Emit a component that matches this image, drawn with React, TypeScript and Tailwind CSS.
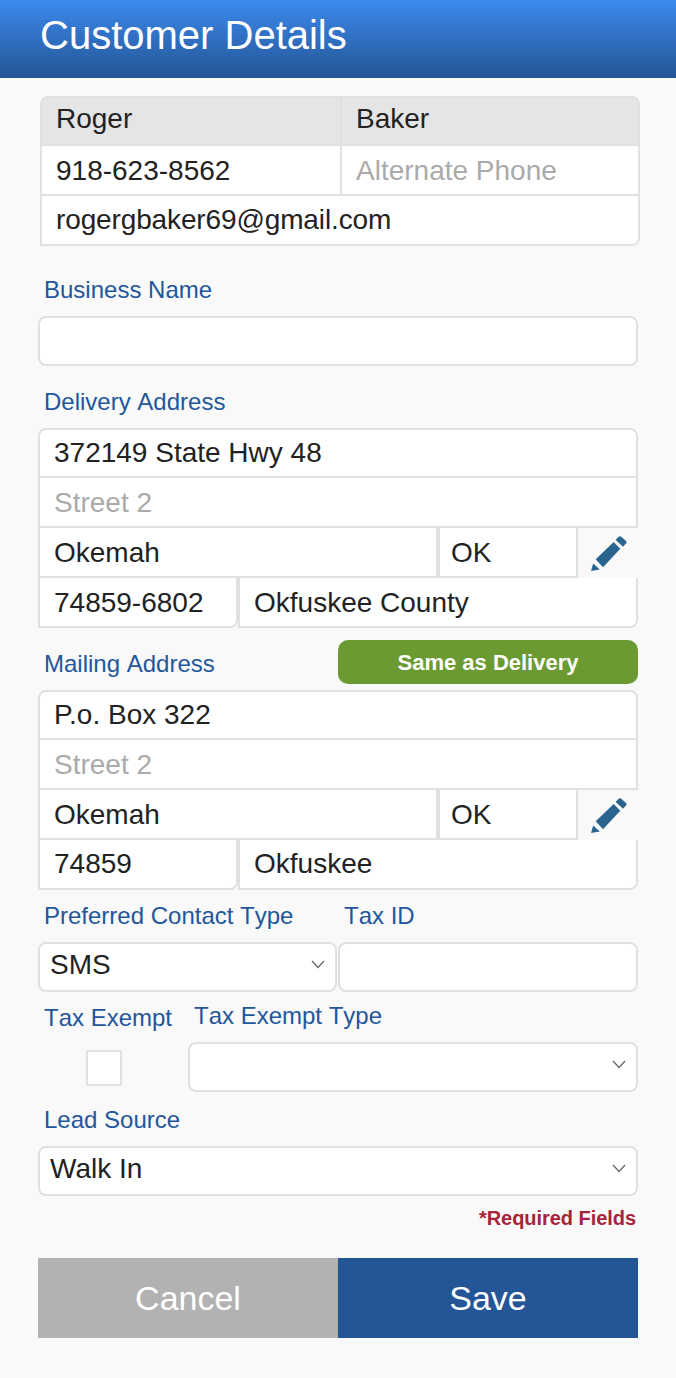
function Chevron() {
  return (
    <svg viewBox="0 0 14 9" className="w-[14px] h-[9px] text-[#666]" fill="none" stroke="currentColor" strokeWidth="1.2">
      <path d="M1 1l6 6.5L13 1" />
    </svg>
  );
}

function Pencil() {
  return (
    <svg viewBox="9 9 37 37" className="w-[37px] h-[37px]" fill="#2a6590">
      <path d="M10 45l2.2-7.6 6.6 6z" />
      <path d="M14.7 33.3L32.7 16l6.6 6.7L22 41.3z" />
      <path d="M34.7 14l2.6-3.1c.8-.9 2-1 2.9-.2l4.6 4c.9.8 1 2 .2 2.9l-3 3.1z" />
    </svg>
  );
}

function Label({ children, className = "" }: { children: string; className?: string }) {
  return <div className={"text-[24px] leading-[28px] text-[#23569a] [font-kerning:none] " + className}>{children}</div>;
}

function Cell({ value, placeholder, className = "" }: { value?: string; placeholder?: string; className?: string }) {
  return (
    <div className={"flex items-center h-full px-[14px] border-[#e0e0e0] bg-white " + className}>
      {value ? <span className="text-[#222]">{value}</span> : <span className="text-[#aaa]">{placeholder}</span>}
    </div>
  );
}

function SelectBox({ value, className = "" }: { value?: string; className?: string }) {
  return (
    <div className={"relative h-[50px] rounded-lg border-2 border-[#e0e0e0] bg-white flex items-center pl-[10px] pb-[4px] text-[#222] " + className}>
      {value}
      <div className="absolute right-[10px] top-[16px] flex">
        <Chevron />
      </div>
    </div>
  );
}

function AddressBlock({ street, city, state, zip, county, lastRowDown }: { street: string; city: string; state: string; zip: string; county: string; lastRowDown?: boolean }) {
  return (
    <div className="text-[28px]">
      <div className="h-[50px]">
        <Cell value={street} className="border-2 rounded-t-lg" />
      </div>
      <div className="h-[50px]">
        <Cell placeholder="Street 2" className="border-2 border-t-0 pt-[2px]" />
      </div>
      <div className="h-[50px] flex">
        <div className="w-[400px]">
          <Cell value={city} className="border-2 border-t-0 pt-[2px]" />
        </div>
        <div className="w-[140px]">
          <Cell value={state} className="border-2 border-t-0 pl-[11px] pt-[2px]" />
        </div>
        <div className="w-[60px] flex items-center justify-center">
          <Pencil />
        </div>
      </div>
      <div className="h-[50px] flex">
        <div className="w-[200px]">
          <Cell value={zip} className={"border-2 border-t-0 rounded-br-lg " + (lastRowDown ? "pt-[2px]" : "")} />
        </div>
        <div className="flex-1">
          <Cell value={county} className={"border-2 border-t-0 rounded-br-lg " + (lastRowDown ? "pt-[2px]" : "")} />
        </div>
      </div>
    </div>
  );
}

export default function App() {
  return (
    <div className="w-[676px] min-h-[1378px] bg-[#f9f9f9] font-['Liberation_Sans',Arial,sans-serif]">
      <div className="h-[78px] pl-[40px] pb-[8px] flex items-center bg-gradient-to-b from-[#3c8aef] to-[#245595] text-white text-[40px]">
        Customer Details
      </div>

      <div className="px-[38px] text-[28px]">
        <div className="mt-[18px] ml-[2px] -mr-[2px] text-[28px]">
          <div className="h-[50px] flex">
            <div className="w-[300px]">
              <Cell value="Roger" className="border-2 border-r-0 rounded-tl-lg bg-[#e5e5e5]! pb-[4px]" />
            </div>
            <div className="flex-1">
              <Cell value="Baker" className="border-2 rounded-tr-lg bg-[#e5e5e5]! pb-[4px]" />
            </div>
          </div>
          <div className="h-[50px] flex">
            <div className="w-[300px]">
              <Cell value="918-623-8562" className="border-2 border-t-0 border-r-0 pt-[2px]" />
            </div>
            <div className="flex-1">
              <Cell placeholder="Alternate Phone" className="border-2 border-t-0 pt-[2px]" />
            </div>
          </div>
          <div className="h-[50px] tracking-[-0.13px]">
            <Cell value="rogergbaker69@gmail.com" className="border-2 border-t-0 rounded-br-lg" />
          </div>
        </div>

        <Label className="mt-[30px] ml-[6px]">Business Name</Label>
        <div className="mt-[12px] h-[50px] rounded-lg border-2 border-[#e0e0e0] bg-white" />

        <Label className="mt-[22px] ml-[6px]">Delivery Address</Label>
        <div className="mt-[12px]">
          <AddressBlock street="372149 State Hwy 48" city="Okemah" state="OK" zip="74859-6802" county="Okfuskee County" lastRowDown />
        </div>

        <div className="mt-[12px] h-[44px] flex items-center justify-between">
          <Label className="ml-[6px] mt-[4px]">Mailing Address</Label>
          <div className="w-[300px] h-[44px] rounded-[10px] bg-[#6a9a31] text-white font-bold text-[22px] flex items-center justify-center">
            Same as Delivery
          </div>
        </div>
        <div className="mt-[6px]">
          <AddressBlock street="P.o. Box 322" city="Okemah" state="OK" zip="74859" county="Okfuskee" />
        </div>

        <div className="mt-[12px] flex">
          <Label className="ml-[6px] w-[300px]">Preferred Contact Type</Label>
          <Label>Tax ID</Label>
        </div>
        <div className="mt-[12px] flex gap-[1px]">
          <SelectBox value="SMS" className="w-[299px]" />
          <div className="flex-1 h-[50px] rounded-lg border-2 border-[#e0e0e0] bg-white" />
        </div>

        <div className="mt-[10px] flex">
          <div className="w-[150px]">
            <Label className="ml-[6px] mt-[2px]">Tax Exempt</Label>
            <div className="mt-[18px] ml-[48px] w-[36px] h-[36px] border-2 border-[#e0e0e0] bg-white" />
          </div>
          <div className="flex-1">
            <Label className="ml-[6px]">Tax Exempt Type</Label>
            <SelectBox className="mt-[12px]" />
          </div>
        </div>

        <Label className="mt-[14px] ml-[6px]">Lead Source</Label>
        <SelectBox value="Walk In" className="mt-[12px]" />

        <div className="mt-[10px] pr-[2px] text-right text-[20px] leading-[24px] font-bold text-[#a6243a] tracking-[-0.05px]">*Required Fields</div>

        <div className="mt-[28px] flex h-[80px] text-white text-[34px] font-light">
          <div className="flex-1 bg-[#b2b2b2] flex items-center justify-center">Cancel</div>
          <div className="flex-1 bg-[#245596] flex items-center justify-center">Save</div>
        </div>
      </div>
    </div>
  );
}
